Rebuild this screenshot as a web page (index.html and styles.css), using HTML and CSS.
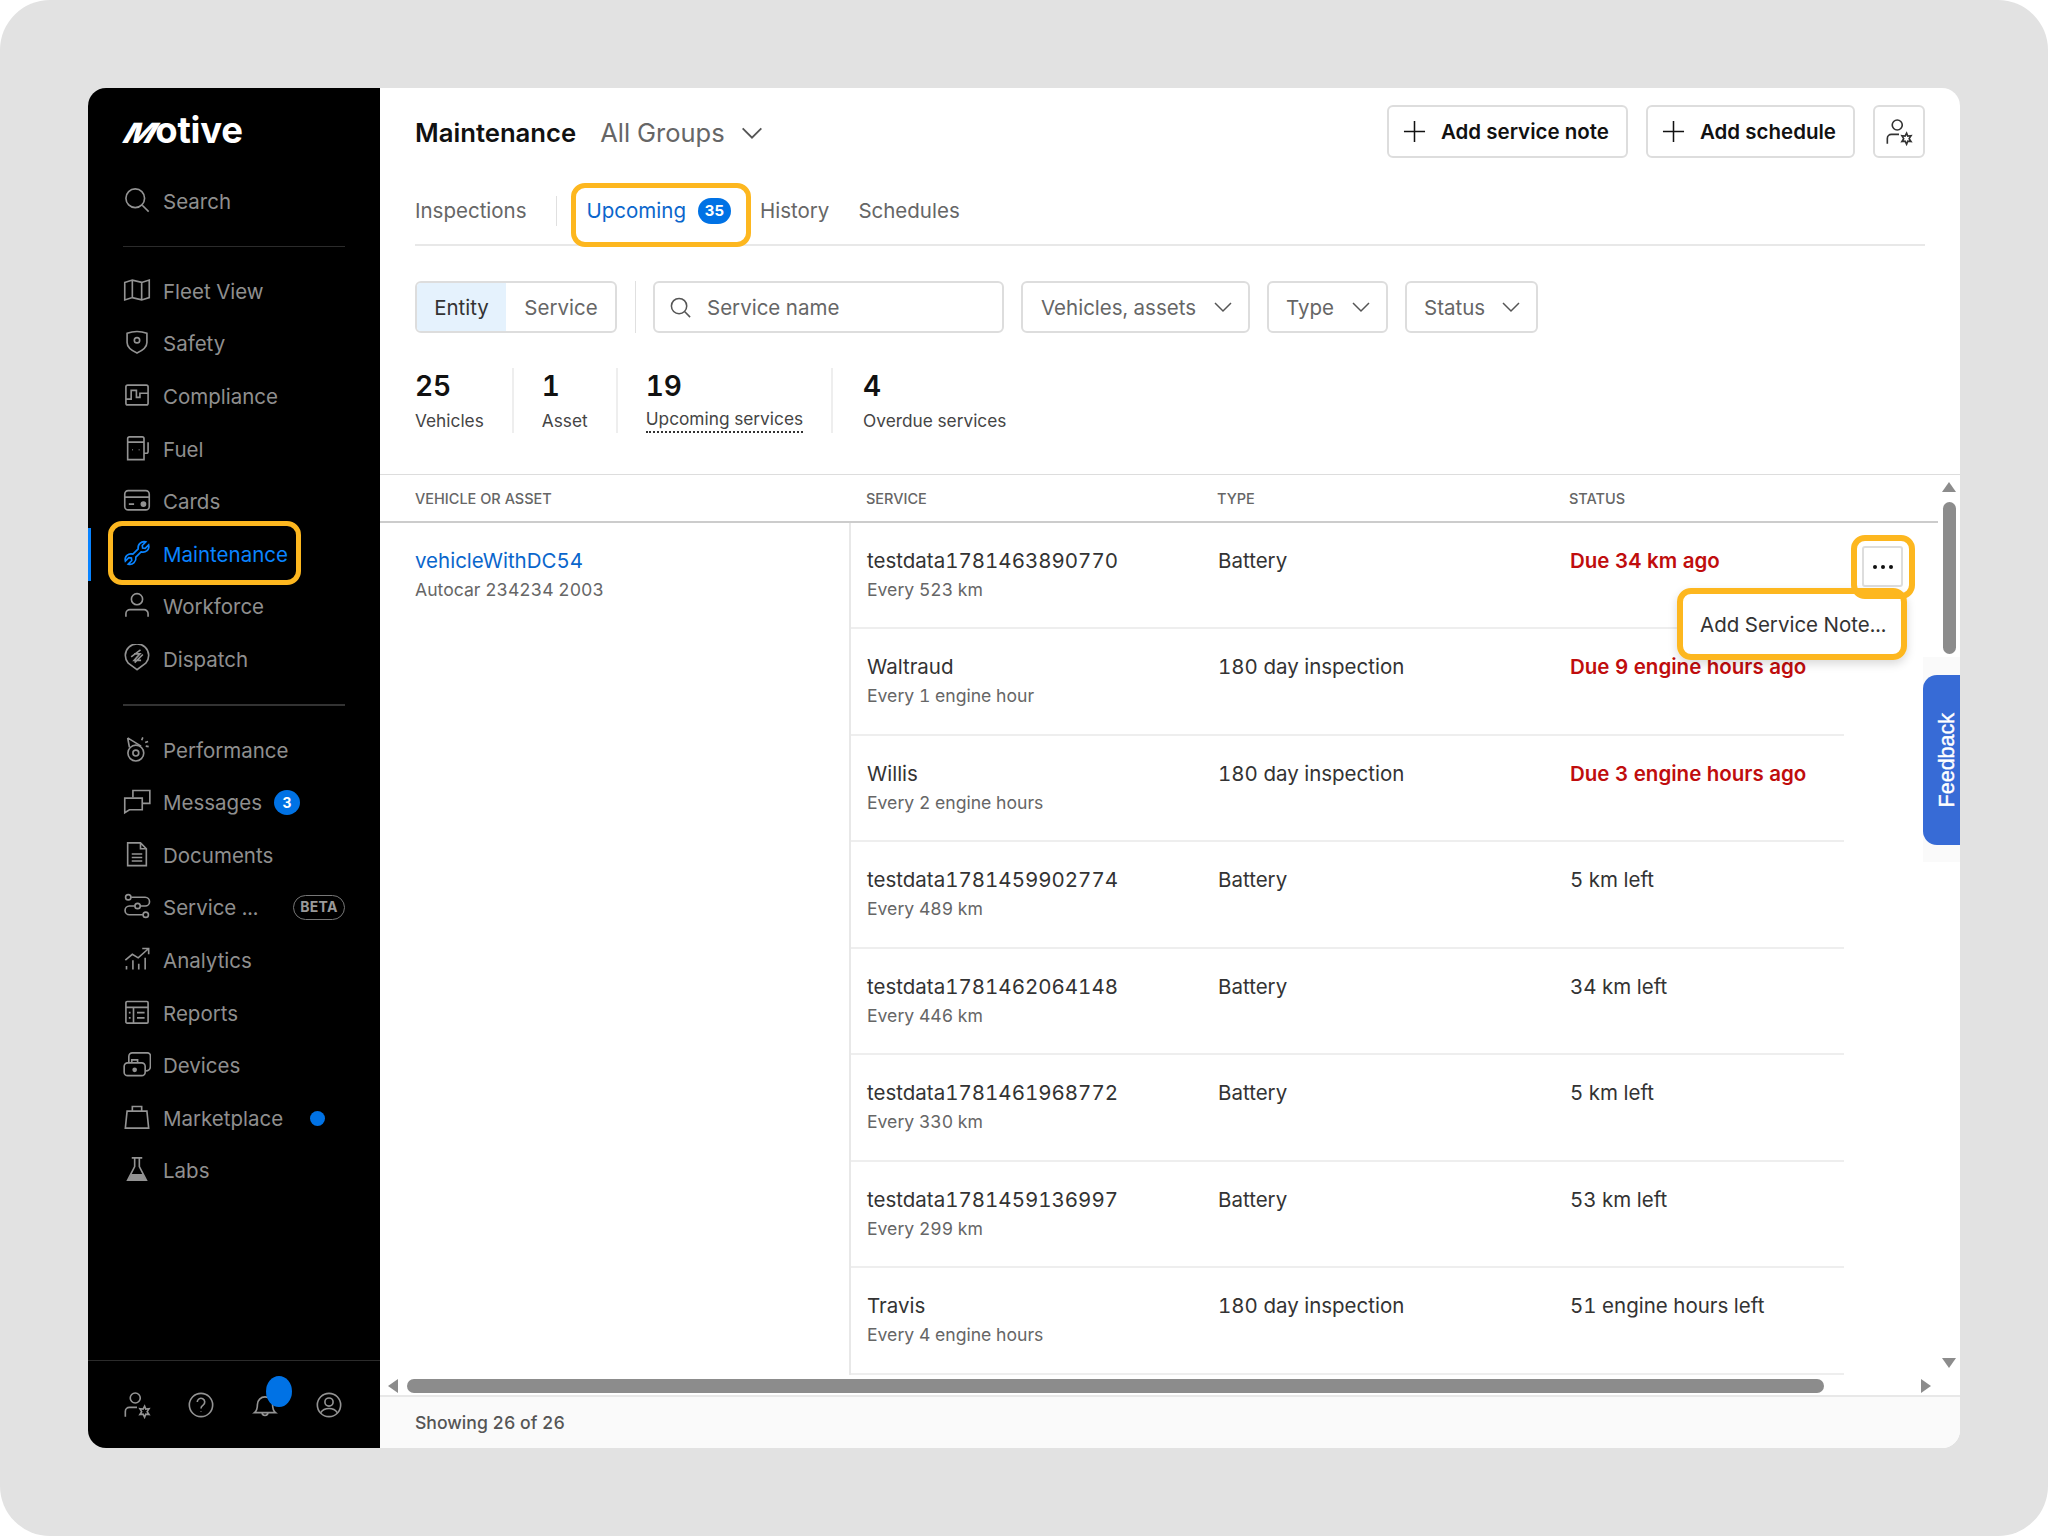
FILE: index.html
```html
<!DOCTYPE html>
<html lang="en">
<head>
    <meta charset="UTF-8">
    <meta name="viewport" content="width=device-width, initial-scale=1.0">
    <title>Maintenance</title>
    <link rel="stylesheet" href="styles.css">
</head>
<body>
    <svg class="sprites" width="0" height="0">
        <symbol id="i-search" viewBox="0 0 24 24"><circle cx="10.5" cy="10.5" r="8"/><path d="M16.5 16.5L22 22"/></symbol>
        <symbol id="i-map" viewBox="0 0 24 24"><path d="M1.5 5.5L8 3.5l8 2 6.5-2v15l-6.5 2-8-2-6.500 2zM8 3.500v15M16 5.500v15"/></symbol>
        <symbol id="i-shield" viewBox="0 0 24 24"><path d="M3.500 4.500C9 2.500 15 2.500 20.500 4.500v8c0 4-4 7-8.500 9-4.500-2-8.500-5-8.500-9z"/><circle cx="12" cy="10.500" r="2.300"/></symbol>
        <symbol id="i-compliance" viewBox="0 0 24 24"><rect x="2.500" y="3.500" width="19" height="17" rx="1.500"/><path d="M2.500 15.500H7V8h4.500v6h3v-3.500h7"/></symbol>
        <symbol id="i-fuel" viewBox="0 0 24 24"><path d="M4 22V4a1.500 1.500 0 0 1 1.500-1.500h11A1.500 1.500 0 0 1 18 4v18zM4 7h14M18 16.500h2a1.500 1.500 0 0 0 1.500-1.500V7"/><path d="M8 13.500h.6M13.500 13.500h.6"/></symbol>
        <symbol id="i-card" viewBox="0 0 24 24"><rect x="1.500" y="4" width="21" height="16.500" rx="3"/><path d="M1.500 9.500h21M5 15.500h4.500"/><circle class="solid" cx="17.500" cy="15.500" r="1.800"/></symbol>
        <symbol id="i-wrench" viewBox="0 0 24 24"><path d="M13 8.500c-.6-3.500 2.500-7 6.500-6l-3 3 .3 2.200 2.200.3 3-3c1 4-2.500 7-6.500 6L11 15.500c.6 3.500-2.500 7-6.500 6l3-3-.3-2.200-2.200-.3-3 3c-1-4 2.500-7 6.500-6z"/></symbol>
        <symbol id="i-user" viewBox="0 0 24 24"><circle cx="12" cy="7" r="4.800"/><path d="M2.500 22v-2.500a3.500 3.500 0 0 1 3.500-3.500h12a3.500 3.500 0 0 1 3.500 3.500V22"/></symbol>
        <symbol id="i-dispatch" viewBox="0 0 24 24"><path d="M12 22l-7.500-5.500a10 10 0 1 1 15 0z"/><path d="M7 11l8-6M9.500 8.500h5l-5 5.500h6M17 9l-7 7"/></symbol>
        <symbol id="i-perf" viewBox="0 0 24 24"><circle cx="11" cy="15.500" r="6.800"/><circle cx="11" cy="15.500" r="2.500"/><path d="M4 2.500l11.500 7M4 2.500l1.500 8M17 2l-1 2.500M21.500 5.500l-2.500 1M22 10l-2.500-.5"/></symbol>
        <symbol id="i-msg" viewBox="0 0 24 24"><path d="M8.500 9V3h14.500v11h-6"/><path d="M1.500 9.500H16.500v10H5.500L1.500 22z"/></symbol>
        <symbol id="i-doc" viewBox="0 0 24 24"><path d="M4 2.500h11l5 5v14.500H4zM15 2.500v5h5M7.500 12h9M7.500 15h9M7.500 18h9"/></symbol>
        <symbol id="i-service" viewBox="0 0 24 24"><circle cx="4.500" cy="4.500" r="2.300"/><circle cx="12.500" cy="12" r="2.300"/><circle cx="19.500" cy="19.500" r="2.300"/><path d="M7 4.500h12a3.700 3.700 0 0 1 0 7.500h-4M10 12H5.500a3.700 3.700 0 0 0 0 7.500H17"/></symbol>
        <symbol id="i-chart" viewBox="0 0 24 24"><path d="M2 13l6-5 5 3 9-8M16.500 3H22v5M3 21v-3M8.500 21v-8M13.500 21v-5M19 21V11"/></symbol>
        <symbol id="i-report" viewBox="0 0 24 24"><rect x="2.500" y="3" width="19" height="18.500" rx="1"/><path d="M2.500 8h19M9 8v13.500M12 12.500h6.500M12 17h6.500M5 12.500h1.500M5 17h1.500"/></symbol>
        <symbol id="i-device" viewBox="0 0 24 24"><path d="M5 11V5.500a3 3 0 0 1 3-3h13a2.500 2.500 0 0 1 2.500 2.500v9a4 4 0 0 1-4 4"/><rect x="1" y="11" width="18" height="11" rx="3"/><path d="M7.500 11V8.500h5V11"/><circle class="solid" cx="10" cy="17" r="1.300"/></symbol>
        <symbol id="i-bag" viewBox="0 0 24 24"><path d="M3.500 7h17L22 21.500H2zM8 7V3h8v4"/></symbol>
        <symbol id="i-flask" viewBox="0 0 24 24"><path d="M7.500 2.500h9M10 2.500V10L4 21.500h16L14 10V2.500"/><path class="solid" d="M7.500 17h9l2 4h-13z"/></symbol>
        <symbol id="i-usergear" viewBox="0 0 24 24"><circle cx="10.500" cy="6" r="4.300"/><path d="M2 22v-4.500A3.500 3.500 0 0 1 5.500 14H12"/><path d="M18.500 13l1 2.500 2.800-.3-1.600 2.500 1.600 2.500-2.800-.3-1 2.600-1.300-2.600-2.700.3 1.500-2.500-1.500-2.500 2.700.3z"/></symbol>
        <symbol id="i-help" viewBox="0 0 24 24"><circle cx="12" cy="12" r="10"/><path d="M8.800 9.500a3.200 3.200 0 1 1 5 2.600c-1.200.8-1.800 1.500-1.800 2.900M12 17.500v.6"/></symbol>
        <symbol id="i-bell" viewBox="0 0 24 24"><path d="M3 18.500c2-1.500 2.500-3.500 2.500-7a6.500 6.500 0 0 1 13 0c0 3.500.5 5.500 2.500 7zM9.500 18.500a2.500 2.500 0 0 0 5 0"/></symbol>
        <symbol id="i-profile" viewBox="0 0 24 24"><circle cx="12" cy="12" r="10"/><circle cx="12" cy="9.500" r="3.500"/><path d="M5 18.500c1.500-2.500 4-3.500 7-3.500s5.500 1 7 3.500"/></symbol>
        <symbol id="i-chev" viewBox="0 0 24 24"><path d="M4 8l8 8 8-8"/></symbol>
        <symbol id="i-plus" viewBox="0 0 24 24"><path d="M12 1v22M1 12h22"/></symbol>
    </svg>

    <div class="page">
        <div class="frame">
            <!-- Left navigation -->
            <aside class="sidebar">
                <div class="logo"><span class="logo-m">M</span>otive</div>
                <a class="nav-item search-item"><svg class="nav-icon"><use href="#i-search"/></svg>Search</a>
                <div class="nav-divider"></div>
                <nav class="nav-group">
                    <a class="nav-item"><svg class="nav-icon"><use href="#i-map"/></svg>Fleet View</a>
                    <a class="nav-item"><svg class="nav-icon"><use href="#i-shield"/></svg>Safety</a>
                    <a class="nav-item"><svg class="nav-icon"><use href="#i-compliance"/></svg>Compliance</a>
                    <a class="nav-item"><svg class="nav-icon"><use href="#i-fuel"/></svg>Fuel</a>
                    <a class="nav-item"><svg class="nav-icon"><use href="#i-card"/></svg>Cards</a>
                    <a class="nav-item active"><svg class="nav-icon"><use href="#i-wrench"/></svg>Maintenance</a>
                    <a class="nav-item"><svg class="nav-icon"><use href="#i-user"/></svg>Workforce</a>
                    <a class="nav-item"><svg class="nav-icon"><use href="#i-dispatch"/></svg>Dispatch</a>
                </nav>
                <div class="nav-divider strong"></div>
                <nav class="nav-group">
                    <a class="nav-item"><svg class="nav-icon"><use href="#i-perf"/></svg>Performance</a>
                    <a class="nav-item"><svg class="nav-icon"><use href="#i-msg"/></svg>Messages<span class="nav-count">3</span></a>
                    <a class="nav-item"><svg class="nav-icon"><use href="#i-doc"/></svg>Documents</a>
                    <a class="nav-item"><svg class="nav-icon"><use href="#i-service"/></svg>Service ...<span class="beta">BETA</span></a>
                    <a class="nav-item"><svg class="nav-icon"><use href="#i-chart"/></svg>Analytics</a>
                    <a class="nav-item"><svg class="nav-icon"><use href="#i-report"/></svg>Reports</a>
                    <a class="nav-item"><svg class="nav-icon"><use href="#i-device"/></svg>Devices</a>
                    <a class="nav-item"><svg class="nav-icon"><use href="#i-bag"/></svg>Marketplace<span class="nav-dot"></span></a>
                    <a class="nav-item"><svg class="nav-icon"><use href="#i-flask"/></svg>Labs</a>
                </nav>
                <div class="side-footer">
                    <svg class="nav-icon"><use href="#i-usergear"/></svg>
                    <svg class="nav-icon"><use href="#i-help"/></svg>
                    <span class="bell"><svg class="nav-icon"><use href="#i-bell"/></svg><span class="bell-dot"></span></span>
                    <svg class="nav-icon"><use href="#i-profile"/></svg>
                </div>
            </aside>

            <main class="main">
                <div class="title-row">
                    <h1>Maintenance</h1>
                    <div class="group-select">All Groups<svg class="chev"><use href="#i-chev"/></svg></div>
                    <div class="title-actions">
                        <button class="btn"><svg class="plus"><use href="#i-plus"/></svg>Add service note</button>
                        <button class="btn"><svg class="plus"><use href="#i-plus"/></svg>Add schedule</button>
                        <button class="btn btn-icon"><svg class="gear-user"><use href="#i-usergear"/></svg></button>
                    </div>
                </div>

                <div class="tabs">
                    <a class="tab">Inspections</a>
                    <span class="tab-sep"></span>
                    <a class="tab tab-active">Upcoming<span class="tab-count">35</span></a>
                    <a class="tab">History</a>
                    <a class="tab">Schedules</a>
                </div>

                <div class="filters">
                    <div class="toggle"><span class="toggle-on">Entity</span><span class="toggle-off">Service</span></div>
                    <span class="filter-sep"></span>
                    <div class="search-box"><svg class="search-icon"><use href="#i-search"/></svg>Service name</div>
                    <div class="select select-vehicles">Vehicles, assets<svg class="select-chev"><use href="#i-chev"/></svg></div>
                    <div class="select select-type">Type<svg class="select-chev"><use href="#i-chev"/></svg></div>
                    <div class="select select-status">Status<svg class="select-chev"><use href="#i-chev"/></svg></div>
                </div>

                <div class="stats">
                    <div class="stat"><b>25</b><span>Vehicles</span></div>
                    <div class="stat"><b>1</b><span>Asset</span></div>
                    <div class="stat"><b>19</b><span class="dotted">Upcoming services</span></div>
                    <div class="stat stat-last"><b>4</b><span>Overdue services</span></div>
                </div>

                <div class="table-wrap">
                    <div class="table">
                        <div class="table-head">
                            <div>VEHICLE OR ASSET</div>
                            <div>SERVICE</div>
                            <div>TYPE</div>
                            <div>STATUS</div>
                        </div>
                        <div class="table-body">
                            <div class="vehicle-cell">
                                <a class="vehicle-link">vehicleWithDC54</a>
                                <div class="sub">Autocar 234234 2003</div>
                            </div>
                            <div class="rows">
                                <div class="row">
                                    <div><div class="name">testdata1781463890770</div><div class="sub">Every 523 km</div></div>
                                    <div class="name">Battery</div>
                                    <div class="name due">Due 34 km ago</div>
                                </div>
                                <div class="row">
                                    <div><div class="name">Waltraud</div><div class="sub">Every 1 engine hour</div></div>
                                    <div class="name">180 day inspection</div>
                                    <div class="name due">Due 9 engine hours ago</div>
                                </div>
                                <div class="row">
                                    <div><div class="name">Willis</div><div class="sub">Every 2 engine hours</div></div>
                                    <div class="name">180 day inspection</div>
                                    <div class="name due">Due 3 engine hours ago</div>
                                </div>
                                <div class="row">
                                    <div><div class="name">testdata1781459902774</div><div class="sub">Every 489 km</div></div>
                                    <div class="name">Battery</div>
                                    <div class="name">5 km left</div>
                                </div>
                                <div class="row">
                                    <div><div class="name">testdata1781462064148</div><div class="sub">Every 446 km</div></div>
                                    <div class="name">Battery</div>
                                    <div class="name">34 km left</div>
                                </div>
                                <div class="row">
                                    <div><div class="name">testdata1781461968772</div><div class="sub">Every 330 km</div></div>
                                    <div class="name">Battery</div>
                                    <div class="name">5 km left</div>
                                </div>
                                <div class="row">
                                    <div><div class="name">testdata1781459136997</div><div class="sub">Every 299 km</div></div>
                                    <div class="name">Battery</div>
                                    <div class="name">53 km left</div>
                                </div>
                                <div class="row">
                                    <div><div class="name">Travis</div><div class="sub">Every 4 engine hours</div></div>
                                    <div class="name">180 day inspection</div>
                                    <div class="name">51 engine hours left</div>
                                </div>
                            </div>
                        </div>
                    </div>
                    <div class="vscroll">
                        <span class="arrow-up"></span>
                        <span class="vthumb"></span>
                        <span class="arrow-down"></span>
                    </div>
                </div>

                <div class="hscroll">
                    <span class="arrow-left"></span>
                    <span class="hthumb"></span>
                    <span class="arrow-right"></span>
                </div>

                <div class="table-footer">Showing 26 of 26</div>

                <!-- Overlays -->
                <button class="more-btn"><span></span><span></span><span></span></button>
                <div class="more-menu">Add Service Note...</div>
                <div class="feedback-wrap"><div class="feedback"><span>Feedback</span></div></div>
            </main>

            <!-- Tutorial highlight boxes -->
            <div class="hl hl-nav"></div>
            <div class="hl hl-tab"></div>
            <div class="hl hl-more"></div>
            <div class="hl hl-menu"></div>
        </div>
    </div>
</body>
</html>
```

FILE: styles.css
```css
* {
    box-sizing: border-box;
}

body {
    margin: 0;
    background-color: #fff;
    font-family: Inter, "Liberation Sans", sans-serif;
    font-variant-numeric: tabular-nums;
}

.sprites {
    position: absolute;
}

.page {
    width: 2048px;
    height: 1536px;
    padding: 88px;
    background-color: #e2e2e2;
    border-radius: 50px;
}

.frame {
    position: relative;
    display: flex;
    width: 1872px;
    height: 1360px;
    background-color: #fff;
    border-radius: 18px;
    overflow: hidden;
}

/* Sidebar */

.sidebar {
    display: flex;
    flex-direction: column;
    flex: 0 0 292px;
    background-color: #000;
    color: #8f8f8f;
}

.logo {
    height: 87px;
    padding: 21px 0 0 40px;
    color: #fff;
    font-size: 36.5px;
    font-weight: 700;
    letter-spacing: -0.2px;
    line-height: 42px;
}

.logo-m {
    display: inline-block;
    transform: skewX(-30deg) scaleX(1.15);
    margin-right: 1px;
    font-weight: 800;
    font-size: 28px;
}

.nav-item {
    display: flex;
    align-items: center;
    height: 52.6px;
    padding-left: 35px;
    font-size: 20.5px;
    color: #8f8f8f;
    white-space: nowrap;
}

.nav-icon {
    width: 28px;
    height: 28px;
    margin: 0 12px 3px 0;
    fill: none;
    stroke: #939393;
    stroke-width: 1.4;
    flex-shrink: 0;
}

.solid {
    fill: #939393;
}

.search-item {
    height: 52px;
}

.nav-divider {
    height: 1px;
    margin: 19px 35px 18px;
    background-color: #2b2b2b;
}

.nav-divider.strong {
    height: 2px;
    margin: 18px 35px 18px;
    background-color: #333;
}

.nav-item.active {
    position: relative;
    color: #0a84ff;
}

.nav-item.active .nav-icon {
    stroke: #0a84ff;
}

.nav-item.active::before {
    content: "";
    position: absolute;
    left: 0;
    top: 0;
    bottom: 0;
    width: 3px;
    background-color: #0a84ff;
}

.nav-count {
    width: 26px;
    height: 25px;
    margin-left: 12px;
    background-color: #0072e5;
    border-radius: 50%;
    color: #fff;
    font-size: 14px;
    font-weight: 700;
    line-height: 25px;
    text-align: center;
}

.beta {
    margin-left: auto;
    margin-right: 35px;
    width: 52px;
    height: 25px;
    border: 1px solid #777;
    border-radius: 13px;
    color: #9a9a9a;
    font-size: 14px;
    font-weight: 700;
    line-height: 22px;
    letter-spacing: 0.3px;
    text-align: center;
}

.nav-dot {
    width: 15px;
    height: 15px;
    margin-left: 27px;
    background-color: #0072e5;
    border-radius: 50%;
}

.side-footer {
    display: flex;
    align-items: center;
    margin-top: auto;
    height: 88px;
    padding-left: 35px;
    border-top: 1px solid #2b2b2b;
    gap: 36px;
}

.side-footer .nav-icon {
    margin: 0;
}

.bell {
    position: relative;
    display: flex;
}

.bell-dot {
    position: absolute;
    left: 15px;
    top: -15px;
    width: 26px;
    height: 31px;
    background-color: #0072e5;
    border-radius: 50%;
}

/* Main */

.main {
    position: relative;
    display: flex;
    flex-direction: column;
    flex: 1;
    min-width: 0;
}

.title-row {
    display: flex;
    align-items: center;
    padding: 17px 35px 0 35px;
}

.title-row h1 {
    margin: 2px 24px 0 0;
    font-size: 25.7px;
    font-weight: 600;
    color: #111;
}

.group-select {
    display: flex;
    align-items: center;
    margin-top: 2px;
    font-size: 25.5px;
    color: #666;
}

.chev {
    width: 28px;
    height: 28px;
    margin-left: 13px;
    fill: none;
    stroke: #555;
    stroke-width: 1.6;
}

.title-actions {
    display: flex;
    gap: 18px;
    margin-left: auto;
}

.btn {
    display: flex;
    align-items: center;
    height: 53px;
    padding: 0 17px 0 14px;
    background-color: #fff;
    border: 2px solid #ddd;
    border-radius: 6px;
    font-family: inherit;
    font-size: 20.5px;
    font-weight: 600;
    color: #111;
}

.plus {
    width: 23px;
    height: 23px;
    margin-right: 15px;
    fill: none;
    stroke: #111;
    stroke-width: 1.6;
}

.btn-icon {
    width: 52px;
    padding: 0;
    justify-content: center;
}

.gear-user {
    width: 28px;
    height: 28px;
    fill: none;
    stroke: #333;
    stroke-width: 1.4;
}

.tabs {
    display: flex;
    align-items: center;
    height: 88px;
    margin: 0 35px 0 35px;
    padding-top: 19px;
    border-bottom: 2px solid #e8e8e8;
    font-size: 20.5px;
    color: #666;
}

.tab-sep {
    width: 1px;
    height: 30px;
    margin: 0 30px 0 29px;
    background-color: #e0e0e0;
}

.tab-active {
    display: flex;
    align-items: center;
    margin-right: 29px;
    color: #0a66cc;
}

.tab-count {
    width: 33px;
    height: 26px;
    margin-left: 12px;
    background-color: #0072e5;
    border-radius: 13px;
    color: #fff;
    font-size: 15px;
    font-weight: 700;
    line-height: 26px;
    text-align: center;
}

.tab:last-child {
    margin-left: 29px;
}

.filters {
    display: flex;
    align-items: stretch;
    height: 52px;
    margin: 35px 0 0 35px;
    font-size: 20.5px;
    color: #666;
}

.toggle {
    display: flex;
    width: 202px;
    border: 2px solid #ddd;
    border-radius: 6px;
    overflow: hidden;
}

.toggle span {
    display: flex;
    align-items: center;
    justify-content: center;
}

.toggle-on {
    width: 89px;
    background-color: #e5f2fd;
    color: #333;
}

.toggle-off {
    flex: 1;
    padding-left: 1px;
}

.filter-sep {
    width: 1px;
    margin: 0 17px 0 18px;
    background-color: #e0e0e0;
}

.search-box {
    display: flex;
    align-items: center;
    width: 351px;
    padding-left: 14px;
    border: 2px solid #ddd;
    border-radius: 6px;
}

.search-icon {
    width: 23px;
    height: 23px;
    margin-right: 15px;
    fill: none;
    stroke: #555;
    stroke-width: 1.6;
}

.select {
    display: flex;
    align-items: center;
    justify-content: space-between;
    margin-left: 17px;
    padding: 0 13px 0 18px;
    border: 2px solid #ddd;
    border-radius: 6px;
}

.select-vehicles {
    width: 229px;
}

.select-type {
    width: 121px;
    padding-left: 17px;
}

.select-status {
    width: 133px;
    padding-left: 17px;
}

.select-chev {
    width: 24px;
    height: 24px;
    fill: none;
    stroke: #555;
    stroke-width: 1.5;
}

.stats {
    display: flex;
    height: 65px;
    margin: 35px 0 0 35px;
}

.stat {
    display: flex;
    flex-direction: column;
    justify-content: space-between;
    padding: 0 28px;
    border-left: 2px solid #eee;
}

.stat:first-child {
    padding-left: 0;
    border-left: none;
}

.stat-last {
    padding-left: 30px;
}

.stat b {
    font-size: 28px;
    font-weight: 600;
    line-height: 36px;
    color: #111;
}

.stat span {
    font-size: 17.3px;
    line-height: 24px;
    color: #444;
}

.stat .dotted {
    border-bottom: 2px dotted #333;
}

/* Table */

.table-wrap {
    display: flex;
    flex: 1;
    min-height: 0;
    margin-top: 41px;
    border-top: 1px solid #ddd;
}

.table {
    flex: 1;
    min-width: 0;
    overflow: hidden;
}

.table-head {
    display: grid;
    grid-template-columns: 451px 351px 352px 1fr;
    align-items: center;
    height: 48px;
    padding-left: 35px;
    border-bottom: 2px solid #ccc;
    font-size: 14.5px;
    font-weight: 500;
    color: #666;
}

.table-body {
    display: flex;
}

.vehicle-cell {
    flex: 0 0 469px;
    padding: 23px 0 0 35px;
}

.vehicle-link {
    display: block;
    font-size: 20.5px;
    line-height: 30px;
    color: #0a66cc;
}

.rows {
    flex: 0 0 995px;
    border-left: 2px solid #e8e8e8;
}

.row {
    display: grid;
    grid-template-columns: 351px 352px 1fr;
    height: 106.45px;
    padding: 23px 0 0 16px;
    border-bottom: 2px solid #eee;
}

.name {
    font-size: 20.5px;
    line-height: 30px;
    color: #333;
}

.sub {
    margin-top: 1px;
    font-size: 17.6px;
    line-height: 26px;
    color: #666;
}

.due {
    font-weight: 600;
    color: #c00d0d;
}

.vscroll {
    display: flex;
    flex-direction: column;
    align-items: center;
    flex: 0 0 22px;
    padding-top: 7px;
}

.arrow-up,
.arrow-down {
    width: 0;
    height: 0;
    border-left: 7px solid transparent;
    border-right: 7px solid transparent;
}

.arrow-up {
    border-bottom: 10px solid #8c8c8c;
}

.arrow-down {
    margin-top: auto;
    margin-bottom: 7px;
    border-top: 10px solid #8c8c8c;
}

.vthumb {
    width: 13px;
    height: 152px;
    margin-top: 10px;
    background-color: #8c8c8c;
    border-radius: 7px;
}

.hscroll {
    display: flex;
    align-items: center;
    flex: 0 0 20px;
    padding: 1px 29px 0 8px;
}

.arrow-left,
.arrow-right {
    width: 0;
    height: 0;
    border-top: 7px solid transparent;
    border-bottom: 7px solid transparent;
}

.arrow-left {
    border-right: 10px solid #8c8c8c;
}

.arrow-right {
    margin-left: auto;
    border-left: 10px solid #8c8c8c;
}

.hthumb {
    width: 1417px;
    height: 14px;
    margin-left: 9px;
    background-color: #8c8c8c;
    border-radius: 7px;
}

.table-footer {
    flex: 0 0 53px;
    padding: 13px 0 0 35px;
    background-color: #fafafa;
    border-top: 2px solid #e8e8e8;
    font-size: 17.6px;
    font-weight: 500;
    line-height: 26px;
    color: #555;
}

/* Overlays */

.more-btn {
    position: absolute;
    left: 1482px;
    top: 458px;
    display: flex;
    align-items: center;
    justify-content: center;
    gap: 4px;
    width: 41px;
    height: 41px;
    padding: 0;
    background-color: #fff;
    border: 2px solid #ddd;
    border-radius: 3px;
}

.more-btn span {
    width: 4px;
    height: 4px;
    background-color: #111;
    border-radius: 50%;
}

.more-menu {
    position: absolute;
    left: 1297px;
    top: 500px;
    width: 230px;
    height: 72px;
    padding-left: 23px;
    background-color: #fff;
    border-radius: 14px;
    box-shadow: 0 4px 10px rgba(0, 0, 0, 0.15);
    font-size: 20.5px;
    line-height: 74px;
    color: #333;
}

.feedback-wrap {
    position: absolute;
    right: 0;
    top: 569px;
    width: 37px;
    height: 205px;
    padding-top: 18px;
    background-color: #fafafa;
}

.feedback {
    display: flex;
    align-items: center;
    justify-content: flex-end;
    height: 170px;
    padding-right: 1px;
    background-color: #376bd6;
    border-radius: 14px 0 0 14px;
}

.feedback span {
    writing-mode: vertical-rl;
    transform: rotate(180deg);
    font-family: "Liberation Sans", sans-serif;
    font-size: 21.5px;
    line-height: 24px;
    -webkit-text-stroke: 0.4px #fff;
    color: #fff;
}

.hl {
    position: absolute;
    border: 5px solid #fdb71f;
    border-radius: 14px;
}

.hl-nav {
    left: 20px;
    top: 433px;
    width: 193px;
    height: 64px;
}

.hl-tab {
    left: 483px;
    top: 95px;
    width: 180px;
    height: 64px;
}

.hl-more {
    left: 1763px;
    top: 447px;
    width: 64px;
    height: 64px;
    border-width: 6px;
}

.hl-menu {
    left: 1589px;
    top: 500px;
    width: 230px;
    height: 72px;
    border-width: 6px;
}
```
